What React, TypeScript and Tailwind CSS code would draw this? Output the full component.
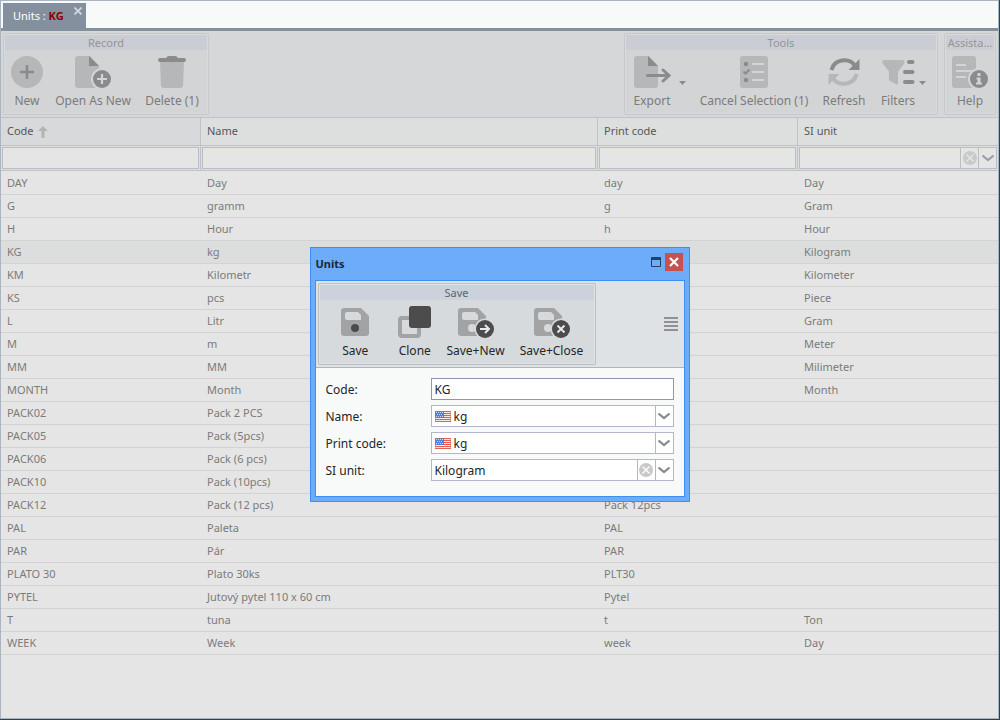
import React from "react";

type Unit = { code: string; name: string; print: string; si: string };

const units: Unit[] = [
  { code: "DAY", name: "Day", print: "day", si: "Day" },
  { code: "G", name: "gramm", print: "g", si: "Gram" },
  { code: "H", name: "Hour", print: "h", si: "Hour" },
  { code: "KG", name: "kg", print: "kg", si: "Kilogram" },
  { code: "KM", name: "Kilometr", print: "km", si: "Kilometer" },
  { code: "KS", name: "pcs", print: "pcs", si: "Piece" },
  { code: "L", name: "Litr", print: "l", si: "Gram" },
  { code: "M", name: "m", print: "m", si: "Meter" },
  { code: "MM", name: "MM", print: "mm", si: "Milimeter" },
  { code: "MONTH", name: "Month", print: "month", si: "Month" },
  { code: "PACK02", name: "Pack 2 PCS", print: "Pack 2pcs", si: "" },
  { code: "PACK05", name: "Pack (5pcs)", print: "Pack 5pcs", si: "" },
  { code: "PACK06", name: "Pack (6 pcs)", print: "Pack 6pcs", si: "" },
  { code: "PACK10", name: "Pack (10pcs)", print: "Pack 10pcs", si: "" },
  { code: "PACK12", name: "Pack (12 pcs)", print: "Pack 12pcs", si: "" },
  { code: "PAL", name: "Paleta", print: "PAL", si: "" },
  { code: "PAR", name: "Pár", print: "PAR", si: "" },
  { code: "PLATO 30", name: "Plato 30ks", print: "PLT30", si: "" },
  { code: "PYTEL", name: "Jutový pytel 110 x 60 cm", print: "Pytel", si: "" },
  { code: "T", name: "tuna", print: "t", si: "Ton" },
  { code: "WEEK", name: "Week", print: "week", si: "Day" },
];

const LIGHT = "#b6b7b8";
const DARK = "#8b8b8b";
const PANEL = "#d3d4d6";
const DLG_LIGHT = "#a2a3a4";
const DLG_DARK = "#4c4c4c";
const DLG_PANEL = "#d6dadc";

function Icon({ children }: { children: React.ReactNode }) {
  return (
    <svg width="40" height="34" viewBox="0 0 40 34" className="shrink-0 overflow-visible" aria-hidden="true">
      {children}
    </svg>
  );
}

const NewIcon = () => (
  <Icon>
    <circle cx="20" cy="16" r="16" fill={LIGHT} />
    <path d="M20 9v14M13 16h14" stroke={DARK} strokeWidth="2.5" />
  </Icon>
);

const OpenAsNewIcon = () => (
  <Icon>
    <path d="M5 0H17L26 10V32H5a3 3 0 0 1-3-3V3a3 3 0 0 1 3-3z" fill={LIGHT} />
    <path d="M16 0l10 10H16z" fill={DARK} />
    <circle cx="29" cy="23" r="11" fill={PANEL} />
    <circle cx="29" cy="23" r="9" fill={DARK} />
    <path d="M29 18v10M24 23h10" stroke={PANEL} strokeWidth="2.2" />
  </Icon>
);

const DeleteIcon = () => (
  <Icon>
    <path d="M8 6H32L31 29.500a3 3 0 0 1-3 2.500H12a3 3 0 0 1-3-2.500z" fill={LIGHT} />
    <path d="M14 2q1-2 3-2h6q2 0 3 2h6a2 2 0 0 1 0 4H8a2 2 0 0 1 0-4z" fill={DARK} />
  </Icon>
);

const ExportIcon = () => (
  <Icon>
    <path d="M5 0H17L26 10V29a3 3 0 0 1-3 3H5a3 3 0 0 1-3-3V3a3 3 0 0 1 3-3z" fill={LIGHT} />
    <path d="M16 0l10 10H16z" fill={DARK} />
    <path d="M15.500 19.500H36M31 14l6 5.500l-6 5.500" stroke={DARK} strokeWidth="3" fill="none" strokeLinecap="round" />
  </Icon>
);

const CancelIcon = () => (
  <Icon>
    <rect x="6" width="28" height="32" rx="3" fill={LIGHT} />
    <rect x="10" y="6" width="4" height="4" rx="1" fill={DARK} />
    <rect x="10" y="22" width="4" height="4" rx="1" fill={DARK} />
    <path d="M9.500 15.500l2 2l4-4" stroke={DARK} strokeWidth="2" fill="none" />
    <path d="M18 8h12M18 16h12M18 24h12" stroke={PANEL} strokeWidth="2" />
  </Icon>
);

const RefreshIcon = () => (
  <Icon>
    <path d="M7.500 14A13 12 0 0 1 31 9.500" stroke={DARK} strokeWidth="4" fill="none" />
    <path d="M35.500 3V14H24.500z" fill={DARK} />
    <path d="M32.500 18A13 12 0 0 1 9 22.500" stroke={LIGHT} strokeWidth="4" fill="none" />
    <path d="M4.500 29V18H15.500z" fill={LIGHT} />
  </Icon>
);

const FiltersIcon = () => (
  <Icon>
    <path d="M6 4H25q2.500 1 1 4L20 15.500V28q-1 1-2.500 0L11 24.500V15.500L5 8q-2-3 1-4z" fill={LIGHT} />
    <path d="M31 6h3.500M27 16h7.500M27 26h7.500" stroke={DARK} strokeWidth="4" strokeLinecap="round" />
  </Icon>
);

const HelpIcon = () => (
  <Icon>
    <rect x="2" width="24" height="32" rx="3" fill={LIGHT} />
    <path d="M6 9h10M6 15h16M6 21h10" stroke={PANEL} strokeWidth="2" />
    <circle cx="29" cy="23" r="11" fill={PANEL} />
    <circle cx="29" cy="23" r="9" fill={DARK} />
    <path d="M27.500 17h3v3h-3zM26.500 21.500h4v5h1.500v2h-6v-2h1.500v-3h-1z" fill={PANEL} />
  </Icon>
);

const Disk = () => (
  <>
    <path d="M9 2H26L34 10V27a3 3 0 0 1-3 3H9a3 3 0 0 1-3-3V5a3 3 0 0 1 3-3z" fill={DLG_LIGHT} />
    <path d="M12 6H23l3 3v5H12a2 2 0 0 1-2-2V8a2 2 0 0 1 2-2z" fill={DLG_PANEL} />
  </>
);

const SaveIcon = () => (
  <Icon>
    <Disk />
    <circle cx="20" cy="22" r="4" fill={DLG_DARK} />
  </Icon>
);

const CloneIcon = () => (
  <Icon>
    <rect x="5" y="12" width="19" height="18" rx="2" stroke={DLG_LIGHT} strokeWidth="4" fill="none" />
    <rect x="14" y="0" width="22" height="22" rx="3" fill={DLG_DARK} />
  </Icon>
);

function SaveBadge({ mark }: { mark: string }) {
  return (
    <Icon>
      <g transform="translate(-4 0)">
        <Disk />
        <circle cx="20" cy="22" r="4" fill={DLG_PANEL} />
      </g>
      <circle cx="29" cy="23" r="10.500" fill={DLG_PANEL} />
      <circle cx="29" cy="23" r="9" fill={DLG_DARK} />
      <path d={mark} stroke="#e6e8ea" strokeWidth="2" fill="none" />
    </Icon>
  );
}

function ToolGroup({ title, className, children }: { title: string; className: string; children: React.ReactNode }) {
  return (
    <section className={"h-[82px] rounded-[2px] border border-[#c7c8c8] bg-[#d3d4d6] ring-1 ring-inset ring-[#d9dadb] " + className}>
      <h2 className="mx-px mt-px flex h-[15px] justify-center whitespace-nowrap bg-[#cacdd3] text-[11px] leading-[15px] text-[#939597]">{title}</h2>
      <div className="flex pt-[6px]">{children}</div>
    </section>
  );
}

function Tool({ label, className, children }: { label: string; className: string; children: React.ReactNode }) {
  return (
    <button type="button" className={"flex flex-col items-center whitespace-nowrap text-[12px] leading-4 " + className}>
      {children}
      <span className="mt-[3px]">{label}</span>
    </button>
  );
}

function Caret({ label, className }: { label: string; className: string }) {
  return (
    <button type="button" aria-label={label} className={"flex flex-col items-start pt-[25px] " + className}>
      <svg width="7" height="4" viewBox="0 0 7 4" aria-hidden="true">
        <path d="M0 0h7L3.500 4z" fill={DARK} />
      </svg>
    </button>
  );
}

function Chevron({ color }: { color: string }) {
  return (
    <svg width="12" height="8" viewBox="0 0 12 8" aria-hidden="true">
      <path d="M.5 1.500l5.500 4.500l5.500-4.500" stroke={color} strokeWidth="2.200" fill="none" />
    </svg>
  );
}

function ClearMark({ mark }: { mark: string }) {
  return (
    <svg width="14" height="14" viewBox="0 0 14 14" aria-hidden="true">
      <circle cx="7" cy="7" r="7" fill="#c9c9c9" />
      <path d="M3.500 3.500l7 7M10.500 3.500l-7 7" stroke={mark} strokeWidth="1.300" />
    </svg>
  );
}

function Flag() {
  return (
    <svg width="16" height="11" viewBox="0 0 16 11" className="mr-[3px] shrink-0" aria-hidden="true">
      <rect width="16" height="11" fill="#fbe9e4" />
      <path d="M0 .5h16M0 2.500h16M0 4.500h16M0 6.500h16M0 8.500h16M0 10.500h16" stroke="#f0584e" />
      <rect width="9" height="7" fill="#4a7fe0" />
      <path d="M1 1.500h7M2 3.500h6M1 5.500h7" stroke="#cfe0ff" strokeDasharray="1 1" />
      <path d="M.5 .5h15v10H.5z" fill="none" stroke="#c8705c" strokeOpacity=".5" />
    </svg>
  );
}

function Field({
  id,
  label,
  value,
  flag = false,
  clear = false,
  drop = true,
}: {
  id: string;
  label: string;
  value: string;
  flag?: boolean;
  clear?: boolean;
  drop?: boolean;
}) {
  return (
    <div className="flex items-center">
      <label htmlFor={id} className="w-[105px] shrink-0 pt-[2px]">
        {label}
      </label>
      <div className={"flex h-[22px] min-w-0 flex-1 items-center border bg-white pl-[3px] " + (drop ? "border-[#b4b6cb]" : "border-[#9294b0]")}>
        {flag && <Flag />}
        <input id={id} defaultValue={value} className="h-full min-w-0 flex-1 bg-transparent pt-px outline-none" />
        {clear && (
          <button type="button" aria-label="Clear" className="flex h-full w-[18px] shrink-0 items-center justify-center border-l border-[#b4b6cb]">
            <ClearMark mark="#ffffff" />
          </button>
        )}
        {drop && (
          <button type="button" aria-label={"Open " + label} className="flex h-full w-[18px] shrink-0 items-center justify-center border-l border-[#b4b6cb]">
            <Chevron color="#838a95" />
          </button>
        )}
      </div>
    </div>
  );
}

const headCell = "h-[29px] border-r border-[#bfc2c9] pl-[6px] text-left font-normal last:border-r-0";
const filterCell = "border-r border-[#bfc2c9] p-px last:border-r-0";
const filterInput = "block h-[22px] w-full border border-[#b9bdc7] bg-[#e5e5e5] px-1 outline-none";

function UnitsDialog() {
  return (
    <div className="absolute inset-0 flex items-start justify-center pt-[247px]">
      <div role="dialog" aria-labelledby="dialog-title" className="w-[380px] border border-[#3b8ff5] bg-[#6cacf8] p-1 pt-0 text-[#252525]">
        <header className="flex h-8 items-center pl-px">
          <h1 id="dialog-title" className="flex-1 text-[11px] font-bold text-[#1b2733]">
            Units
          </h1>
          <button type="button" aria-label="Maximize" className="mr-1 pb-1">
            <svg width="10" height="10" viewBox="0 0 10 10" aria-hidden="true">
              <path d="M.5 .5h9v9h-9z" fill="none" stroke="#27405f" />
              <path d="M0 0h10v3H0z" fill="#27405f" />
            </svg>
          </button>
          <button type="button" aria-label="Close" className="mr-[2px] mb-1 flex size-[18px] items-center justify-center bg-[#c75050]">
            <svg width="10" height="10" viewBox="0 0 10 10" aria-hidden="true">
              <path d="M1 1l8 8M9 1l-8 8" stroke="#fff" strokeWidth="2.200" />
            </svg>
          </button>
        </header>
        <div className="border border-[#3b8ff5] bg-[#f8fafa]">
          <div className="flex items-center justify-between border-b border-[#abb6bd] bg-[#dee2e5] pt-[2px] pr-[6px] pb-[2px] pl-[2px]">
            <section className="h-[82px] w-[278px] rounded-[2px] border border-[#bcbebf] bg-[#d6dadc] ring-1 ring-inset ring-[#e0e2e3]">
              <h2 className="mx-px mt-px h-[15px] bg-[#cbd2db] text-center text-[11px] leading-[15px] text-[#606468]">Save</h2>
              <div className="flex gap-1 pt-[6px] pl-[9px]">
                <Tool label="Save" className="w-[56px]">
                  <SaveIcon />
                </Tool>
                <Tool label="Clone" className="w-[56px]">
                  <CloneIcon />
                </Tool>
                <Tool label="Save+New" className="w-[58px]">
                  <SaveBadge mark="M24 23h9M29 19l4 4l-4 4" />
                </Tool>
                <Tool label="Save+Close" className="w-[86px] shrink-0">
                  <SaveBadge mark="M25.500 19.500l7 7M32.500 19.500l-7 7" />
                </Tool>
              </div>
            </section>
            <button type="button" aria-label="Menu">
              <svg width="14" height="14" viewBox="0 0 14 14" aria-hidden="true">
                <path d="M0 1h14M0 5h14M0 9h14M0 13h14" stroke="#8f9192" strokeWidth="2" />
              </svg>
            </button>
          </div>
          <form className="flex flex-col gap-[5px] px-[10px] pt-[10px] pb-[15px] text-[12px]">
            <Field id="code" label="Code:" value="KG" drop={false} />
            <Field id="name" label="Name:" value="kg" flag />
            <Field id="print" label="Print code:" value="kg" flag />
            <Field id="si" label="SI unit:" value="Kilogram" clear />
          </form>
        </div>
      </div>
    </div>
  );
}

export default function App() {
  return (
    <div className="relative min-h-screen border-r border-b border-[#2b4350] bg-[#e5e5e5] font-['Noto_Sans','Open_Sans',sans-serif] text-[12px] text-[#7b7b7b]">
      <div className="flex min-h-[calc(100vh-1px)] flex-col border border-[#a9b5c0]">
        <nav className="flex h-[30px] items-end border-b-[3px] border-[#84909d] bg-[#f8fafa] pl-[2px]">
          <div className="flex h-[25px] w-[83px] items-center bg-[#84909d] pl-[10px]">
            <a href="#units" className="flex-1 whitespace-nowrap pt-px text-[11px] text-white">
              Units : <b className="text-[#8b0000]">KG</b>
            </a>
            <button type="button" aria-label="Close tab" className="mr-1 mb-[9px]">
              <svg width="8" height="8" viewBox="0 0 8 8" className="block" aria-hidden="true">
                <path d="M.5 .5l7 7M7.500 .5l-7 7" stroke="#d5dade" strokeWidth="1.600" />
              </svg>
            </button>
          </div>
        </nav>
        <div className="flex h-[86px] justify-between bg-[#d6d7d9] pt-[2px] pr-[2px] pl-[2px]">
          <ToolGroup title="Record" className="w-[206px]">
            <Tool label="New" className="w-[46px]">
              <NewIcon />
            </Tool>
            <Tool label="Open As New" className="w-[86px]">
              <OpenAsNewIcon />
            </Tool>
            <Tool label="Delete (1)" className="w-[72px]">
              <DeleteIcon />
            </Tool>
          </ToolGroup>
          <div className="flex gap-[6px]">
            <ToolGroup title="Tools" className="w-[314px]">
              <Tool label="Export" className="w-[54px]">
                <ExportIcon />
              </Tool>
              <Caret label="Export options" className="w-[18px]" />
              <Tool label="Cancel Selection (1)" className="w-[114px]">
                <CancelIcon />
              </Tool>
              <Tool label="Refresh" className="w-[66px]">
                <RefreshIcon />
              </Tool>
              <Tool label="Filters" className="w-[42px]">
                <FiltersIcon />
              </Tool>
              <Caret label="Filter options" className="w-3" />
            </ToolGroup>
            <ToolGroup title="Assista..." className="w-[52px]">
              <Tool label="Help" className="w-[50px]">
                <HelpIcon />
              </Tool>
            </ToolGroup>
          </div>
        </div>
        <table className="w-full table-fixed border-separate border-spacing-0 text-[11px]">
          <colgroup>
            <col className="w-[200px]" />
            <col />
            <col className="w-[200px]" />
            <col className="w-[200px]" />
          </colgroup>
          <thead>
            <tr className="bg-[#dddfde] text-[#555758] [&>th]:border-y [&>th]:border-y-[#bfc2c9]">
              <th className={headCell + " bg-[#d8d9db]"}>
                <span className="flex items-center gap-1">
                  Code
                  <svg width="10" height="12" viewBox="0 0 10 12" aria-hidden="true">
                    <path d="M5 0l5 5H6.500v7h-3V5H0z" fill="#b3b4b5" />
                  </svg>
                </span>
              </th>
              <th className={headCell}>Name</th>
              <th className={headCell}>Print code</th>
              <th className={headCell}>SI unit</th>
            </tr>
            <tr className="bg-[#dddfde] [&>td]:border-b [&>td]:border-b-[#bfc2c9]">
              <td className={filterCell}>
                <input aria-label="Filter code" className={filterInput} />
              </td>
              <td className={filterCell}>
                <input aria-label="Filter name" className={filterInput} />
              </td>
              <td className={filterCell}>
                <input aria-label="Filter print code" className={filterInput} />
              </td>
              <td className={filterCell}>
                <div className="flex h-[22px] border border-[#b9bdc7] bg-[#e5e5e5]">
                  <input aria-label="Filter SI unit" className="min-w-0 flex-1 px-1 outline-none" />
                  <button type="button" aria-label="Clear filter" className="flex w-[18px] items-center justify-center border-l border-[#b9bdc7]">
                    <ClearMark mark="#e5e5e5" />
                  </button>
                  <button type="button" aria-label="Open SI unit filter" className="flex w-[18px] items-center justify-center border-l border-[#b9bdc7]">
                    <Chevron color="#9b9ea3" />
                  </button>
                </div>
              </td>
            </tr>
          </thead>
          <tbody>
            {units.map((u) => (
              <tr
                key={u.code}
                className={
                  "h-[23px] first:h-6 [&>td]:truncate [&>td]:border-b [&>td]:border-[#d2d3d3] [&>td]:pl-[6px] [&>td]:pt-px " +
                  (u.code === "KG" ? "bg-[#dcdedd]" : "")
                }
              >
                <td>{u.code}</td>
                <td>{u.name}</td>
                <td>{u.print}</td>
                <td>{u.si}</td>
              </tr>
            ))}
          </tbody>
        </table>
      </div>
      <UnitsDialog />
    </div>
  );
}
